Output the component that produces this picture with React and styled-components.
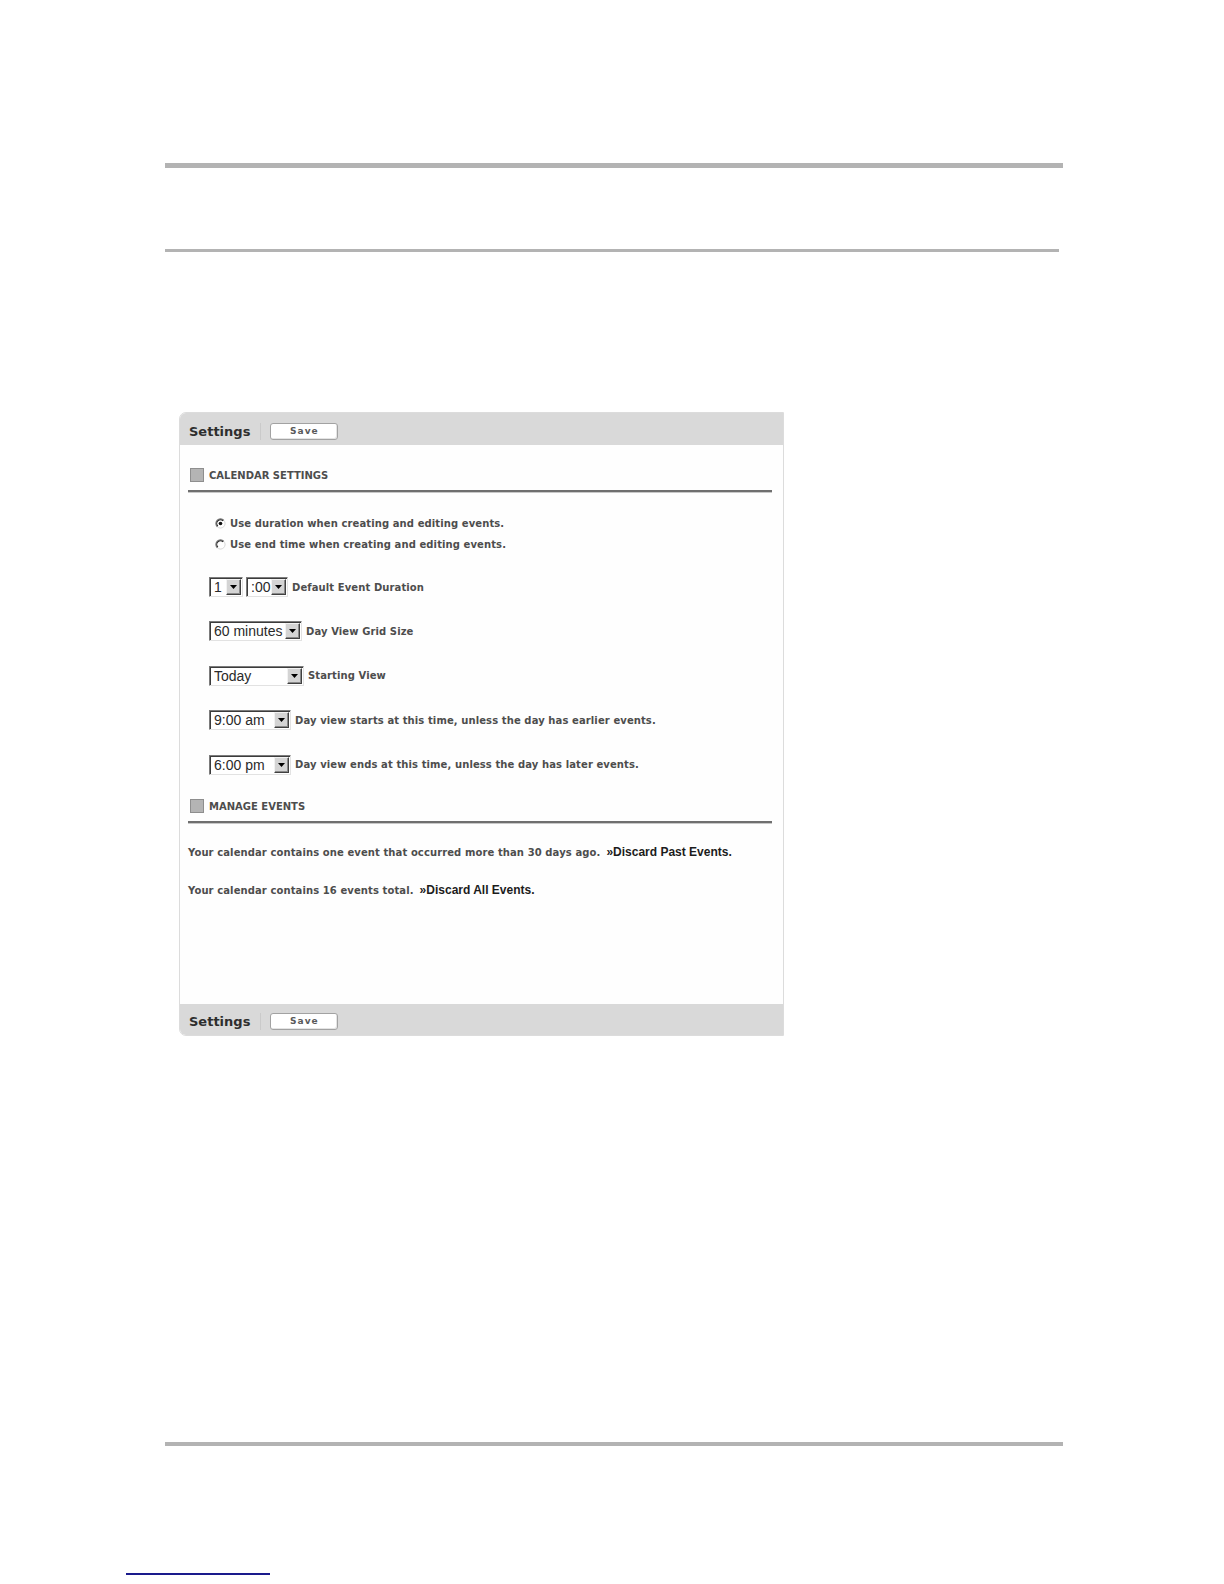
import React from 'react'
import styled, { createGlobalStyle } from 'styled-components'

const GlobalStyle = createGlobalStyle`
  html, body { margin: 0; padding: 0; background: #fff; }
`

const textColor = '#4d4d4d'
const ruleColor = '#b3b3b3'
const barColor = '#d9d9d9'

const Page = styled.div`
  width: 1224px;
  height: 1584px;
  display: flex;
  flex-direction: column;
  padding-top: 163px;
  box-sizing: border-box;
  font-family: "DejaVu Sans", Verdana, sans-serif;
`

const Rule = styled.div`
  margin-left: ${p => p.$left || 165}px;
  margin-top: ${p => p.$top || 0}px;
  width: ${p => p.$width || 898}px;
  height: ${p => p.$thick || 4}px;
  background: ${p => p.$color || ruleColor};
`

const Panel = styled.div`
  margin-left: 179px;
  margin-top: 160px;
  width: 605px;
  height: 624px;
  box-sizing: border-box;
  display: flex;
  flex-direction: column;
  border: 1px solid #dcdcdc;
  border-radius: 7px 0 0 7px;
  overflow: hidden;
  background: #fefefe;
`

const Bar = styled.div`
  height: ${p => p.$height}px;
  flex: none;
  background: ${barColor};
  display: flex;
  align-items: center;
  padding: 4px 0 0 9px;
  box-sizing: border-box;
`

const BarTitle = styled.span`
  font-size: 13px;
  font-weight: bold;
  color: #2e2e2e;
`

const BarDivider = styled.span`
  width: 1px;
  height: 17px;
  background: #cacaca;
  margin: 0 9px 0 10px;
`

const SaveButton = styled.button`
  width: 68px;
  height: 17px;
  padding: 0;
  box-sizing: border-box;
  border: 1px solid #a2a2a2;
  border-radius: 3px;
  background: #fff;
  box-shadow: inset -1px -1px 0 #e4e4e4;
  font-family: "DejaVu Sans", Verdana, sans-serif;
  font-size: 9px;
  font-weight: bold;
  letter-spacing: 1px;
  color: #5a5a5a;
  line-height: 15px;
`

const Body = styled.div`
  flex: 1;
  display: flex;
  flex-direction: column;
  padding: 23px 11px 0 8px;
`

const SectionHead = styled.div`
  display: flex;
  align-items: center;
  height: 14px;
  margin-top: ${p => p.$top || 0}px;
  padding-left: 2px;
  gap: 5px;
  font-size: 10px;
  font-weight: bold;
  color: ${textColor};
`

const SectionBox = styled.span`
  width: 12px;
  height: 12px;
  background: #b4b4b4;
  border: 1px solid #8e8e8e;
`

const SectionLine = styled.div`
  margin-top: 8px;
  height: 2px;
  background: #6f6f6f;
  border-bottom: 1px solid #c8c8c8;
`

const RadioList = styled.div`
  display: flex;
  flex-direction: column;
  gap: 7px;
  margin: 23px 0 0 27px;
`

const RadioRow = styled.label`
  display: flex;
  align-items: center;
  gap: 4px;
  height: 14px;
  font-size: 10px;
  font-weight: bold;
  letter-spacing: 0.1px;
  color: ${textColor};
`

const FieldList = styled.div`
  display: flex;
  flex-direction: column;
  gap: 24.4px;
  margin: 26px 0 0 21px;
`

const FieldRow = styled.div`
  display: flex;
  align-items: center;
  height: 20px;
  gap: 3px;
`

const FieldLabel = styled.span`
  margin-left: 1px;
  font-size: 10px;
  font-weight: bold;
  letter-spacing: 0.1px;
  color: ${textColor};
`

const SelectBox = styled.span`
  width: ${p => p.$width}px;
  height: 20px;
  box-sizing: border-box;
  display: inline-flex;
  align-items: center;
  border: 1px solid;
  border-color: #7c7c7c #e2e2e2 #e2e2e2 #7c7c7c;
  box-shadow: inset 1px 1px 0 #3c3c3c;
  background: #fff;
  padding: 1px 1px 1px 4px;
`

const SelectValue = styled.span`
  flex: 1;
  font-family: "Liberation Sans", Arial, sans-serif;
  font-size: 14px;
  color: #2a2a2a;
  white-space: nowrap;
  overflow: hidden;
`

const SelectButton = styled.span`
  width: 15px;
  height: 16px;
  box-sizing: border-box;
  flex: none;
  display: flex;
  align-items: center;
  justify-content: center;
  background: #d4d4d4;
  border: 1px solid;
  border-color: #f2f2f2 #404040 #404040 #f2f2f2;
  box-shadow: inset -1px -1px 0 #8a8a8a;
`

const ManageText = styled.p`
  margin: ${p => p.$top}px 0 0 0;
  height: 14px;
  line-height: 14px;
  font-size: 10px;
  font-weight: bold;
  letter-spacing: 0.1px;
  color: ${textColor};
  white-space: nowrap;
`

const ActionLink = styled.a`
  margin-left: 6px;
  font-family: "Liberation Sans", Arial, sans-serif;
  font-size: 12px;
  font-weight: bold;
  letter-spacing: 0;
  color: #1c1c1c;
  text-decoration: none;
`

const Arrow = () => (
  <svg width="7" height="4" viewBox="0 0 7 4">
    <path d="M0 0h7L3.5 4z" fill="#000" />
  </svg>
)

const Radio = ({ checked }) => (
  <svg width="11" height="11" viewBox="0 0 12 12">
    <circle cx="6" cy="6" r="5" fill="#fff" stroke="#d4d4d4" strokeWidth="1" />
    <path d="M2.46 9.54A5 5 0 0 1 9.54 2.46" fill="none" stroke="#7a7a7a" strokeWidth="1.2" />
    <path d="M3.17 8.83A4 4 0 0 1 8.83 3.17" fill="none" stroke="#2a2a2a" strokeWidth="1.1" />
    {checked && <circle cx="6" cy="6" r="2" fill="#111" />}
  </svg>
)

const Select = ({ width, value }) => (
  <SelectBox $width={width}>
    <SelectValue>{value}</SelectValue>
    <SelectButton><Arrow /></SelectButton>
  </SelectBox>
)

const SettingsBar = ({ height }) => (
  <Bar $height={height}>
    <BarTitle>Settings</BarTitle>
    <BarDivider />
    <SaveButton>Save</SaveButton>
  </Bar>
)

const fields = [
  { selects: [{ width: 34, value: '1' }, { width: 42, value: ':00' }], label: 'Default Event Duration' },
  { selects: [{ width: 93, value: '60 minutes' }], label: 'Day View Grid Size' },
  { selects: [{ width: 95, value: 'Today' }], label: 'Starting View' },
  { selects: [{ width: 82, value: '9:00 am' }], label: 'Day view starts at this time, unless the day has earlier events.' },
  { selects: [{ width: 82, value: '6:00 pm' }], label: 'Day view ends at this time, unless the day has later events.' },
]

export default function App() {
  return (
    <>
      <GlobalStyle />
      <Page>
        <Rule $thick={5} />
        <Rule $top={81} $thick={3} $width={894} />

        <Panel>
          <SettingsBar height={32} />
          <Body>
            <SectionHead>
              <SectionBox />
              CALENDAR SETTINGS
            </SectionHead>
            <SectionLine />

            <RadioList>
              <RadioRow><Radio checked />Use duration when creating and editing events.</RadioRow>
              <RadioRow><Radio />Use end time when creating and editing events.</RadioRow>
            </RadioList>

            <FieldList>
              {fields.map((f, i) => (
                <FieldRow key={i}>
                  {f.selects.map((s, j) => <Select key={j} width={s.width} value={s.value} />)}
                  <FieldLabel>{f.label}</FieldLabel>
                </FieldRow>
              ))}
            </FieldList>

            <SectionHead $top={24.5}>
              <SectionBox />
              MANAGE EVENTS
            </SectionHead>
            <SectionLine />

            <ManageText $top={20.5}>
              Your calendar contains one event that occurred more than 30 days ago.
              <ActionLink href="#">»Discard Past Events.</ActionLink>
            </ManageText>
            <ManageText $top={24.4}>
              Your calendar contains 16 events total.
              <ActionLink href="#">»Discard All Events.</ActionLink>
            </ManageText>
          </Body>
          <SettingsBar height={31} />
        </Panel>

        <Rule $top={406} $thick={4} />
        <Rule $top={127} $left={126} $width={144} $thick={2} $color="#1a1a8c" />
      </Page>
    </>
  )
}
